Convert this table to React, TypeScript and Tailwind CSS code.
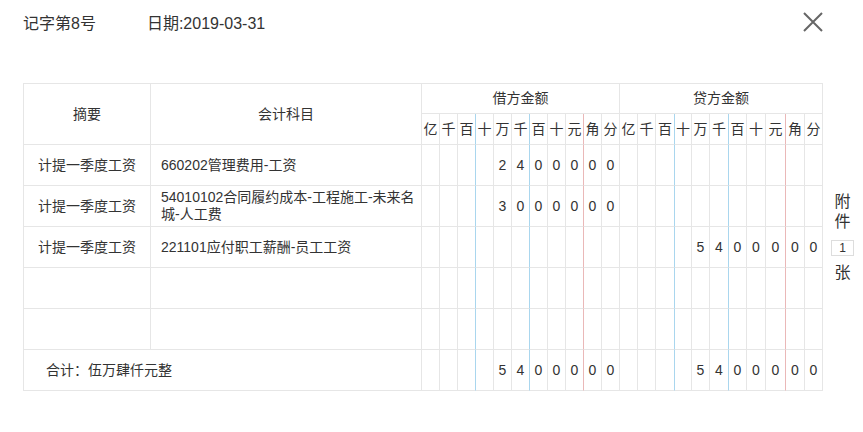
import React from "react";

const subHeads = ["亿", "千", "百", "十", "万", "千", "百", "十", "元", "角", "分"];

type Row = { summary: string; account: React.ReactNode; debit: string[]; credit: string[] };

const empty = Array(11).fill("");
const d = (s: string) => {
  const arr = Array(11).fill("");
  const chars = s.split("");
  for (let i = 0; i < chars.length; i++) arr[11 - chars.length + i] = chars[i];
  return arr;
};

const rows: Row[] = [
  { summary: "计提一季度工资", account: "660202管理费用-工资", debit: d("2400000"), credit: empty },
  {
    summary: "计提一季度工资",
    account: (
      <>
        54010102合同履约成本-工程施工-未来名
        <br />
        城-人工费
      </>
    ),
    debit: d("3000000"),
    credit: empty,
  },
  { summary: "计提一季度工资", account: "221101应付职工薪酬-员工工资", debit: empty, credit: d("5400000") },
  { summary: "", account: "", debit: empty, credit: empty },
  { summary: "", account: "", debit: empty, credit: empty },
];

function lineClass(i: number) {
  if (i === 2 || i === 5) return "border-r-[#a9d6ee]";
  if (i === 8) return "border-r-[#eab8b8]";
  return "border-r-[#e6e6e6]";
}

function MoneyCells({ vals, h }: { vals: string[]; h: string }) {
  return (
    <>
      {vals.map((v, i) => (
        <div
          key={i}
          className={`${h} border-r border-b border-b-[#e6e6e6] ${lineClass(i)} flex items-center justify-center text-[14px] text-[#333]`}
        >
          {v}
        </div>
      ))}
    </>
  );
}

export default function App() {
  return (
    <div className="relative w-[863px] h-[432px] bg-white text-[#333] [font-family:'Liberation_Sans','Noto_Sans_CJK_SC',sans-serif] overflow-hidden">
      <div className="flex items-center h-[23px] mt-[12px] pl-[23px] text-[16px] leading-[23px]">
        <span>记字第8号</span>
        <span className="ml-[51px]">日期:2019-03-31</span>
      </div>
      <button className="absolute left-[803px] top-[12px] w-[20px] h-[20px]">
        <svg width="20" height="20" viewBox="0 0 20 20">
          <path d="M1 1 L19 19 M19 1 L1 19" stroke="#666" strokeWidth="2" fill="none" />
        </svg>
      </button>

      <div className="flex items-center mt-[48px] ml-[23px]">
        <div className="grid grid-cols-[127px_271px_repeat(11,18px)_18px_18px_19px_17px_18px_19px_18px_19px_20px_19px_18px] border-t border-l border-[#e6e6e6] w-[800px]">
          <div className="row-span-2 col-span-1 border-r border-b border-[#e6e6e6] flex items-center justify-center text-[14px]">
            摘要
          </div>
          <div className="row-span-2 border-r border-b border-[#e6e6e6] flex items-center justify-center text-[14px]">
            会计科目
          </div>
          <div className="col-span-11 h-[30px] border-r border-b border-[#e6e6e6] flex items-center justify-center text-[14px]">
            借方金额
          </div>
          <div className="col-span-11 h-[30px] border-r border-b border-[#e6e6e6] flex items-center justify-center text-[14px]">
            贷方金额
          </div>
          <MoneyCells vals={subHeads} h="h-[31px]" />
          <MoneyCells vals={subHeads} h="h-[31px]" />

          {rows.map((r, idx) => (
            <React.Fragment key={idx}>
              <div className="h-[41px] border-r border-b border-[#e6e6e6] flex items-center justify-center text-[14px]">
                {r.summary}
              </div>
              <div className="h-[41px] border-r border-b border-[#e6e6e6] flex items-center pl-[10px] pr-[2px] text-[14px] leading-[17px] whitespace-nowrap">
                <div>{r.account}</div>
              </div>
              <MoneyCells vals={r.debit} h="h-[41px]" />
              <MoneyCells vals={r.credit} h="h-[41px]" />
            </React.Fragment>
          ))}

          <div className="col-span-2 h-[41px] border-r border-b border-[#e6e6e6] flex items-center pl-[22px] text-[14px]">
            合计：伍万肆仟元整
          </div>
          <MoneyCells vals={d("5400000")} h="h-[41px]" />
          <MoneyCells vals={d("5400000")} h="h-[41px]" />
        </div>

        <div className="ml-[8px] w-[23px] flex flex-col items-center text-[16px] leading-[20px] text-[#333]">
          <span>附</span>
          <span>件</span>
          <div className="mt-[8px] w-[23px] h-[16px] border border-[#dddddd] flex items-center justify-center text-[12px] leading-none">
            1
          </div>
          <span className="mt-[7px]">张</span>
        </div>
      </div>
    </div>
  );
}
